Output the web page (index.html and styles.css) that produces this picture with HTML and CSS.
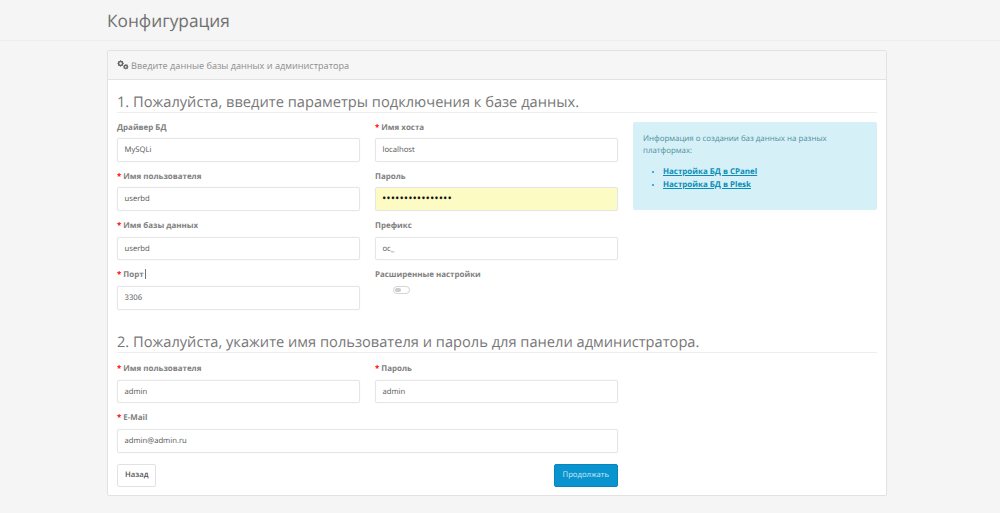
FILE: index.html
```html
<!DOCTYPE html>
<html lang="en">
<head>
    <meta charset="UTF-8">
    <title>Конфигурация</title>
    <link rel="stylesheet" href="styles.css">
</head>
<body>
    <div class="page-header">
        <h1>Конфигурация</h1>
    </div>

    <div class="panel">
        <div class="panel-heading">
            <svg class="cogs" viewBox="0 0 12 10" width="12" height="10">
                <circle cx="3.6" cy="3.4" r="2" fill="none" stroke="#666" stroke-width="1.5"/>
                <path d="M3.6 .3v1M3.6 5.5v1M.5 3.4h1M5.7 3.4h1M1.4 1.2l.7.7M5.1 4.9l.7.7M5.8 1.2l-.7.7M2.1 4.9l-.7.7" stroke="#666" stroke-width="1"/>
                <circle cx="8.8" cy="6.8" r="1.6" fill="none" stroke="#666" stroke-width="1.4"/>
                <path d="M8.8 4.3v1M8.8 8.3v1M6.3 6.8h1M10.3 6.8h1M7 5l.7.7M9.9 7.9l.7.7M10.6 5l-.7.7M7.7 7.9l-.7.7" stroke="#666" stroke-width="1"/>
            </svg>
            Введите данные базы данных и администратора
        </div>
        <div class="panel-body">
            <h2>1. Пожалуйста, введите параметры подключения к базе данных.</h2>
            <div class="db-row">
                <div class="form-grid">
                    <div class="field">
                        <label>Драйвер БД</label>
                        <div class="input">MySQLi</div>
                    </div>
                    <div class="field">
                        <label class="required">Имя хоста</label>
                        <div class="input">localhost</div>
                    </div>
                    <div class="field">
                        <label class="required">Имя пользователя</label>
                        <div class="input">userbd</div>
                    </div>
                    <div class="field">
                        <label>Пароль</label>
                        <div class="input input-filled">••••••••••••••••</div>
                    </div>
                    <div class="field">
                        <label class="required">Имя базы данных</label>
                        <div class="input">userbd</div>
                    </div>
                    <div class="field">
                        <label>Префикс</label>
                        <div class="input">oc_</div>
                    </div>
                    <div class="field">
                        <label class="required">Порт<span class="caret"></span></label>
                        <div class="input">3306</div>
                    </div>
                    <div class="field">
                        <label>Расширенные настройки</label>
                        <div class="switch"><span></span></div>
                    </div>
                </div>
                <div class="info">
                    <p>Информация о создании баз данных на разных платформах:</p>
                    <ul>
                        <li><a href="#">Настройка БД в CPanel</a></li>
                        <li><a href="#">Настройка БД в Plesk</a></li>
                    </ul>
                </div>
            </div>

            <h2 class="second">2. Пожалуйста, укажите имя пользователя и пароль для панели администратора.</h2>
            <div class="form-grid admin-grid">
                <div class="field">
                    <label class="required">Имя пользователя</label>
                    <div class="input">admin</div>
                </div>
                <div class="field">
                    <label class="required">Пароль</label>
                    <div class="input">admin</div>
                </div>
                <div class="field wide">
                    <label class="required">E-Mail</label>
                    <div class="input">admin@admin.ru</div>
                </div>
            </div>
            <div class="buttons">
                <a class="btn" href="#">Назад</a>
                <a class="btn btn-primary" href="#">Продолжать</a>
            </div>
        </div>
    </div>
</body>
</html>
```
FILE: styles.css
```css
html, body {
    height: 100%;
}

body {
    margin: 0;
    background: #f5f5f5;
    font-family: "Open Sans", sans-serif;
    font-size: 7.7px;
    color: #555;
    overflow: hidden;
    text-rendering: geometricPrecision;
}

.page-header {
    height: 41px;
    box-sizing: border-box;
    padding-left: 107px;
    border-bottom: 1px solid #ededed;
}

h1 {
    margin: 0;
    padding-top: 9px;
    font-size: 17.3px;
    line-height: 25px;
    font-weight: 400;
    color: #707070;
}

.panel {
    width: 780px;
    height: 446px;
    box-sizing: border-box;
    margin: 9px 0 0 107px;
    background: #fff;
    border: 1px solid #e2e2e2;
    border-radius: 2px;
}

.panel-heading {
    height: 29px;
    box-sizing: border-box;
    padding: 0 9px;
    display: flex;
    align-items: center;
    gap: 2px;
    background: #f6f6f6;
    border-bottom: 1px solid #e2e2e2;
    color: #8f8f8f;
    font-size: 9.15px;
}

.panel-body {
    padding: 0 9px;
}

h2 {
    margin: 0;
    height: 33px;
    box-sizing: border-box;
    padding-top: 12px;
    font-size: 14.65px;
    line-height: 20px;
    font-weight: 400;
    color: #777;
    border-bottom: 1px solid #eee;
}

h2.second {
    margin-top: 5px;
}

.db-row {
    display: flex;
    gap: 15px;
}

.form-grid {
    width: 501px;
    display: grid;
    grid-template-columns: 243px 243px;
    column-gap: 15px;
    row-gap: 3.3px;
    padding-top: 8.6px;
}

.admin-grid {
    padding-top: 9.6px;
}

.field {
    height: 46px;
}

.wide {
    grid-column: 1 / 3;
}

label {
    display: block;
    height: 16.6px;
    font-size: 7.95px;
    line-height: 13px;
    font-weight: 700;
    color: #808080;
}

.required::before {
    content: "*";
    margin-right: 2px;
    color: #f00;
}

.caret {
    display: inline-block;
    width: 1px;
    height: 10px;
    margin-left: 1px;
    vertical-align: -2px;
    background: #777;
}

.input {
    height: 23.6px;
    box-sizing: border-box;
    padding: 0 6.5px;
    line-height: 22px;
    background: #fff;
    border: 1px solid #e6e6e6;
    border-radius: 2px;
    box-shadow: 0 0 2px rgba(0,0,0,0.05);
}

.input-filled {
    background: #fdfbc4;
    color: #111;
    font-size: 11.6px;
    font-weight: 400;
    padding-left: 6px;
}

.switch {
    width: 15px;
    height: 6px;
    margin: 0 0 0 18px;
    border: 1px solid #d4d4d4;
    border-radius: 5px;
    background: #fff;
}

.switch span {
    display: block;
    width: 6px;
    height: 4px;
    margin: 1px;
    border-radius: 3px;
    background: #ccc;
}

.info {
    width: 244px;
    height: 88px;
    box-sizing: border-box;
    margin-top: 9px;
    padding: 11px 10px;
    background: #d6f0f7;
    border-radius: 2px;
    color: #4f8f9f;
    font-size: 7.9px;
    line-height: 12px;
}

.info p {
    margin: 0 0 9px;
}

.info ul {
    margin: 0;
    padding-left: 20px;
    color: #0a9cc4;
}

.info li {
    line-height: 12.6px;
}

.info a {
    color: #0a8db8;
    font-size: 7.95px;
    font-weight: 700;
}

.buttons {
    display: flex;
    justify-content: space-between;
    width: 501px;
    margin-top: 6px;
}

.btn {
    height: 23px;
    box-sizing: border-box;
    padding: 0 7px;
    line-height: 21px;
    background: #fff;
    border: 1px solid #e2e2e2;
    border-radius: 2px;
    color: #555;
    font-weight: 600;
    text-decoration: none;
}

.btn-primary {
    padding: 0 8px;
    background: #0a94cf;
    border-color: #0a85bb;
    color: #cfeaf6;
    font-weight: 400;
}
```
